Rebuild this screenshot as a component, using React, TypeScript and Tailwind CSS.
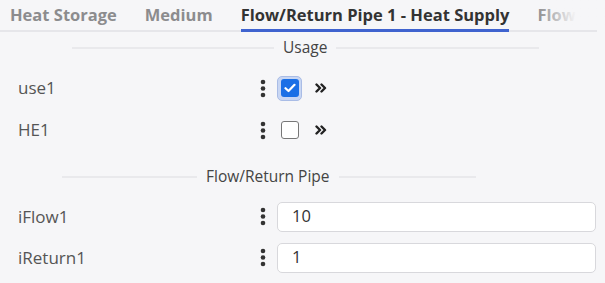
import React from "react";

const font = { fontFamily: '"Open Sans", "Liberation Sans", sans-serif' };

function Dots() {
  return (
    <svg width="6" height="19" viewBox="0 0 6 19" aria-hidden="true">
      <circle cx="3" cy="3" r="2.3" fill="#333" />
      <circle cx="3" cy="9.5" r="2.3" fill="#333" />
      <circle cx="3" cy="16" r="2.3" fill="#333" />
    </svg>
  );
}

function Chevrons() {
  return (
    <svg width="12" height="10" viewBox="0 0 12 10" aria-hidden="true">
      <path d="M1.5 1.5 L5 5 L1.5 8.5 M6.5 1.5 L10 5 L6.5 8.5" fill="none" stroke="#222" strokeWidth="2.4" strokeLinecap="round" strokeLinejoin="round" />
    </svg>
  );
}

function SectionHeader({ title, left, leftW, rightW }: { title: string; left: number; leftW: number; rightW: number }) {
  return (
    <div className="flex h-[28px] items-center" style={{ paddingLeft: left }}>
      <div className="h-[2px] bg-[#e9e9ec]" style={{ width: leftW }} />
      <span className="px-[9px] text-[15.5px] text-[#444] leading-none">{title}</span>
      <div className="h-[2px] bg-[#e9e9ec]" style={{ width: rightW }} />
    </div>
  );
}

function CheckRow({ label, checked }: { label: string; checked: boolean }) {
  return (
    <div className="flex h-[42px] items-center">
      <span className="w-[260px] pl-[18px] text-[17px] text-[#555]">{label}</span>
      <Dots />
      <div className="ml-[11px] flex h-[25px] w-[25px] items-center justify-center">
        {checked ? (
          <div className="flex h-[25px] w-[25px] items-center justify-center rounded-[5px] border border-[#a9bce6] bg-[#c8d6f3]">
            <div className="flex h-[18px] w-[18px] items-center justify-center rounded-[3px] bg-[#1a6fe6]">
              <svg width="12" height="10" viewBox="0 0 12 10" aria-hidden="true">
                <path d="M1.5 5.2 L4.5 8 L10.5 1.8" fill="none" stroke="#fff" strokeWidth="2.2" strokeLinecap="round" strokeLinejoin="round" />
              </svg>
            </div>
          </div>
        ) : (
          <div className="h-[18px] w-[18px] rounded-[3px] border border-[#777] bg-white" />
        )}
      </div>
      <div className="ml-[13px]">
        <Chevrons />
      </div>
    </div>
  );
}

function InputRow({ label, value }: { label: string; value: string }) {
  return (
    <div className="flex h-[41px] items-center">
      <span className="w-[260px] pl-[18px] text-[17px] text-[#555]">{label}</span>
      <Dots />
      <div className="ml-[11px] flex h-[30px] w-[319px] items-center rounded-[5px] border border-[#d8d8dc] bg-white pl-[14px] text-[16.5px] text-[#333]">
        {value}
      </div>
    </div>
  );
}

export default function App() {
  const tabs = ["Heat Storage", "Medium", "Flow/Return Pipe 1 - Heat Supply", "Flow"];
  return (
    <div className="h-[283px] w-[605px] overflow-hidden bg-[#f6f6f8]" style={font}>
      <div className="relative h-[32px] w-[597px] border-b-2 border-[#e6e6ea]">
        <div className="flex h-[30px] items-center gap-[28px] whitespace-nowrap pl-[10px]">
          {tabs.map((t, i) => (
            <div
              key={t}
              className={`relative flex h-[30px] items-center text-[16.5px] font-bold ${i === 2 ? "text-[#333]" : "text-[#8c8c8e]"}`}
            >
              {t}
              {i === 2 && <div className="absolute bottom-[-2px] left-0 right-0 h-[3px] bg-[#3f63cf]" />}
            </div>
          ))}
        </div>
        <div className="absolute right-[-8px] top-0 h-[29px] w-[72px] bg-gradient-to-r from-transparent from-[5%] to-[#f6f6f8] to-[60%]" />
      </div>
      <div className="pt-[2px]">
        <SectionHeader title="Usage" left={72} leftW={202} rightW={203} />
      </div>
      <div className="pt-[5px]">
        <CheckRow label="use1" checked />
        <CheckRow label="HE1" checked={false} />
      </div>
      <div className="pt-[12px]">
        <SectionHeader title="Flow/Return Pipe" left={62} leftW={135} rightW={137} />
      </div>
      <div className="pt-[5px]">
        <InputRow label="iFlow1" value="10" />
        <InputRow label="iReturn1" value="1" />
      </div>
    </div>
  );
}
